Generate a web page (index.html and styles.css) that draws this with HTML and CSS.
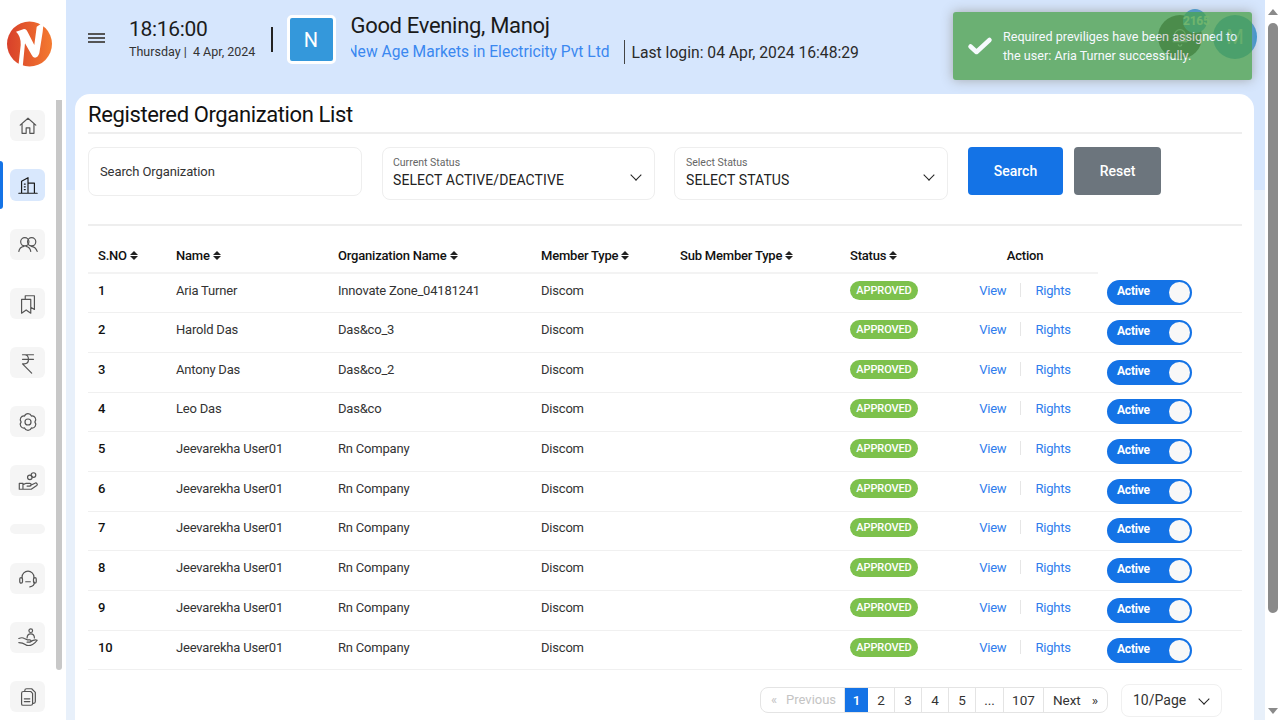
FILE: index.html
```html
<!DOCTYPE html>
<html lang="en">
<head>
    <meta charset="UTF-8">
    <title>Registered Organization List</title>
    <link rel="stylesheet" href="styles.css">
</head>
<body>
<div class="app">

    <aside class="sidebar">
        <div class="logo">
            <svg width="46" height="46" viewBox="0 0 46 46">
                <defs>
                    <linearGradient id="logoFill" x1="0" y1="0" x2="1" y2="0">
                        <stop offset="0" stop-color="#d8402a"/>
                        <stop offset="1" stop-color="#f47a30"/>
                    </linearGradient>
                </defs>
                <circle cx="22.500" cy="23" r="22.500" fill="url(#logoFill)"/>
                <path d="M9 10.700 L17 8 Q19.500 7.800 21.300 12.300 L27.300 24 L29.700 5.700 L36.300 1.300 Q36.500 5 35.700 10.700 L32.300 32.300 Q31 36.500 28 36.700 Q25.800 36.500 24.700 34 L18 22.300 L15.700 46 L11.300 46 L13.700 24 Q14 15 9 10.700 Z" fill="#fff"/>
            </svg>
        </div>
        <div class="side-body">
            <nav class="side-nav">
                <a class="side-item"><svg viewBox="0 0 24 24"><path d="M3.500 11 12 3.500l8.500 7.500M5.500 9.500V20h4.500v-6h4v6h4.500V9.500"/></svg></a>
                <a class="side-item current"><svg viewBox="0 0 24 24"><path d="M2 21h20M5 21V8l7-4v17M12 10h7v11M8 11h1M8 14h1M8 17h1"/></svg></a>
                <a class="side-item"><svg viewBox="0 0 24 24"><circle cx="8.500" cy="8.500" r="4.500"/><circle cx="16" cy="8.500" r="4.500"/><path d="M2 19c.5-3 3-5 5.500-5.500M10 13.500c2.500.5 4.500 2.500 5 5.500M15.500 13.500c3 .2 5.500 2.500 6.500 5.500"/></svg></a>
                <a class="side-item"><svg viewBox="0 0 24 24"><path d="M5 7h10v15l-5-3.500L5 22zM9 7V3h10v15l-4-2.500"/></svg></a>
                <a class="side-item"><svg viewBox="0 0 24 24"><path d="M6 3h12M6 8h12M8 3c6 0 6 10 0 10H6l10 10"/></svg></a>
                <a class="side-item"><svg viewBox="0 0 24 24"><circle cx="12" cy="12" r="3.300"/><path d="M19.500 12A4 4 0 0 1 15.750 18.500 4 4 0 0 1 8.250 18.500 4 4 0 0 1 4.500 12 4 4 0 0 1 8.250 5.500 4 4 0 0 1 15.750 5.500 4 4 0 0 1 19.500 12Z"/></svg></a>
                <a class="side-item"><svg viewBox="0 0 24 24"><circle cx="18" cy="5.500" r="2.500"/><circle cx="14" cy="8" r="2.500"/><path d="M2.500 14.500h4v6.500h-4zM6.500 16l3.500-1.500h4a1.500 1.500 0 0 1 0 3h-3M14.500 17l5-2.500a1.500 1.500 0 0 1 2 2.500l-6 4h-9"/></svg></a>
                <a class="side-item thin"></a>
                <a class="side-item"><svg viewBox="0 0 24 24"><path d="M5.500 11V10a6.500 6.500 0 0 1 13 0v1M19 15.500c0 3-2 4.500-5 5"/><rect x="3" y="10.500" width="3" height="6" rx="1.500"/><rect x="18" y="10.500" width="3" height="6" rx="1.500"/><path d="M9.500 15h5"/></svg></a>
                <a class="side-item"><svg viewBox="0 0 24 24"><circle cx="15" cy="4" r="2"/><path d="M11 12c0-3 2-4.500 4-4.500s4 1.500 4 4.500M2 12.500c2.500-1 4.500-1 6 0l3 1.500h3a1.200 1.200 0 0 1 0 2.500h-3M2 17c3 0 5 .5 7 2s5 1.500 8 0 4-3 5-4.500c-2-1-4-.5-8 2"/></svg></a>
                <a class="side-item"><svg viewBox="0 0 24 24"><path d="M15 6H7a2 2 0 0 0-2 2v11.500A1.500 1.500 0 0 0 6.500 21H15a2 2 0 0 0 2-2V8zM8.500 6V5a2 2 0 0 1 2-2H16l4 4v10a2 2 0 0 1-2 2h-1M8 14h6M8 17h6"/></svg></a>
            </nav>
            <div class="side-thumb"></div>
        </div>
        <div class="side-marker"></div>
    </aside>

    <main class="main">
        <header class="topbar">
            <div class="burger"><span></span><span></span><span></span></div>
            <div class="clock">
                <div class="clock-time">18:16:00</div>
                <div class="clock-date">Thursday |&nbsp; 4 Apr, 2024</div>
            </div>
            <div class="top-sep"></div>
            <div class="org-tile">N</div>
            <div class="welcome">
                <div class="welcome-name">Good Evening, Manoj</div>
                <div class="welcome-row">
                    <span class="welcome-org"><span>New Age Markets in Electricity Pvt Ltd</span></span>
                    <span class="welcome-login">Last login: 04 Apr, 2024 16:48:29</span>
                </div>
            </div>
            <div class="top-tools">
                <div class="bell">
                    <svg width="22" height="22" viewBox="0 0 24 24"><path d="M6 17V10a6 6 0 0 1 12 0v7M4 17h16M10 20a2 2 0 0 0 4 0"/></svg>
                    <span class="bell-count">2165</span>
                </div>
                <div class="user-round">M</div>
            </div>
        </header>

        <section class="card">
            <h1 class="card-title">Registered Organization List</h1>

            <div class="filters">
                <div class="field search-field">Search Organization</div>
                <div class="field select-field">
                    <div>
                        <div class="select-label">Current Status</div>
                        <div class="select-value">SELECT ACTIVE/DEACTIVE</div>
                    </div>
                    <span class="chevron"></span>
                </div>
                <div class="field select-field select-last">
                    <div>
                        <div class="select-label">Select Status</div>
                        <div class="select-value">SELECT STATUS</div>
                    </div>
                    <span class="chevron"></span>
                </div>
                <button class="btn btn-search">Search</button>
                <button class="btn btn-reset">Reset</button>
            </div>

            <table class="org-table">
                <thead>
                    <tr>
                        <th class="col-no">S.NO <i class="sort"></i></th>
                        <th class="col-name">Name <i class="sort"></i></th>
                        <th class="col-org">Organization Name <i class="sort"></i></th>
                        <th class="col-member">Member Type <i class="sort"></i></th>
                        <th class="col-sub">Sub Member Type <i class="sort"></i></th>
                        <th class="col-status">Status <i class="sort"></i></th>
                        <th class="col-action">Action</th>
                        <th class="col-toggle"></th>
                    </tr>
                </thead>
                <tbody>
                    <tr><td class="num">1</td><td>Aria Turner</td><td>Innovate Zone_04181241</td><td>Discom</td><td></td><td><span class="badge">APPROVED</span></td><td class="links"><a>View</a><b></b><a>Rights</a></td><td class="switch"><span class="toggle">Active</span></td></tr>
                    <tr><td class="num">2</td><td>Harold Das</td><td>Das&amp;co_3</td><td>Discom</td><td></td><td><span class="badge">APPROVED</span></td><td class="links"><a>View</a><b></b><a>Rights</a></td><td class="switch"><span class="toggle">Active</span></td></tr>
                    <tr><td class="num">3</td><td>Antony Das</td><td>Das&amp;co_2</td><td>Discom</td><td></td><td><span class="badge">APPROVED</span></td><td class="links"><a>View</a><b></b><a>Rights</a></td><td class="switch"><span class="toggle">Active</span></td></tr>
                    <tr><td class="num">4</td><td>Leo Das</td><td>Das&amp;co</td><td>Discom</td><td></td><td><span class="badge">APPROVED</span></td><td class="links"><a>View</a><b></b><a>Rights</a></td><td class="switch"><span class="toggle">Active</span></td></tr>
                    <tr><td class="num">5</td><td>Jeevarekha User01</td><td>Rn Company</td><td>Discom</td><td></td><td><span class="badge">APPROVED</span></td><td class="links"><a>View</a><b></b><a>Rights</a></td><td class="switch"><span class="toggle">Active</span></td></tr>
                    <tr><td class="num">6</td><td>Jeevarekha User01</td><td>Rn Company</td><td>Discom</td><td></td><td><span class="badge">APPROVED</span></td><td class="links"><a>View</a><b></b><a>Rights</a></td><td class="switch"><span class="toggle">Active</span></td></tr>
                    <tr><td class="num">7</td><td>Jeevarekha User01</td><td>Rn Company</td><td>Discom</td><td></td><td><span class="badge">APPROVED</span></td><td class="links"><a>View</a><b></b><a>Rights</a></td><td class="switch"><span class="toggle">Active</span></td></tr>
                    <tr><td class="num">8</td><td>Jeevarekha User01</td><td>Rn Company</td><td>Discom</td><td></td><td><span class="badge">APPROVED</span></td><td class="links"><a>View</a><b></b><a>Rights</a></td><td class="switch"><span class="toggle">Active</span></td></tr>
                    <tr><td class="num">9</td><td>Jeevarekha User01</td><td>Rn Company</td><td>Discom</td><td></td><td><span class="badge">APPROVED</span></td><td class="links"><a>View</a><b></b><a>Rights</a></td><td class="switch"><span class="toggle">Active</span></td></tr>
                    <tr><td class="num">10</td><td>Jeevarekha User01</td><td>Rn Company</td><td>Discom</td><td></td><td><span class="badge">APPROVED</span></td><td class="links"><a>View</a><b></b><a>Rights</a></td><td class="switch"><span class="toggle">Active</span></td></tr>
                </tbody>
            </table>

            <div class="table-foot">
                <div class="pager">
                    <a class="pg pg-prev"><span>«</span>Previous</a>
                    <a class="pg pg-on">1</a>
                    <a class="pg pg-n">2</a>
                    <a class="pg pg-n">3</a>
                    <a class="pg pg-n">4</a>
                    <a class="pg pg-n">5</a>
                    <a class="pg pg-dots">...</a>
                    <a class="pg pg-last">107</a>
                    <a class="pg pg-next">Next<span>»</span></a>
                </div>
                <div class="page-size">10/Page <span class="chevron"></span></div>
            </div>
        </section>
    </main>

    <div class="page-scroll">
        <span class="arrow-up"></span>
        <div class="page-thumb"></div>
        <span class="arrow-down"></span>
    </div>

    <div class="toast">
        <svg width="26" height="20" viewBox="0 0 26 20"><path d="M3.500 10.500l6 5.500L22.500 4" /></svg>
        <p>Required previliges have been assigned to the user: Aria Turner successfully.</p>
    </div>
</div>
</body>
</html>
```
FILE: styles.css
```css
*{
    box-sizing: border-box;
}

html, body{
    margin: 0;
    height: 720px;
    overflow: hidden;
}

body{
    font-family: "Roboto", "Liberation Sans", sans-serif;
    color: #212529;
    background: #fff;
}

.app{
    position: relative;
    display: flex;
    width: 1280px;
    height: 720px;
}

/* sidebar */
.sidebar{
    position: relative;
    width: 66px;
    flex: none;
    background: #fff;
}

.logo{
    height: 100px;
    padding: 21px 0 0 7px;
}

.side-body{
    display: flex;
}

.side-nav{
    width: 56px;
    padding: 10px 0 0 10px;
    display: flex;
    flex-direction: column;
    gap: 28px;
}

.side-item{
    width: 35px;
    height: 31px;
    background: #f5f5f5;
    border-radius: 6px;
    display: flex;
    align-items: center;
    justify-content: center;
}

.side-item svg{
    width: 22px;
    height: 22px;
    fill: none;
    stroke: #555;
    stroke-width: 1.300;
    stroke-linejoin: round;
    stroke-linecap: round;
}

.side-item.current{
    background: #d9e8fd;
    height: 32px;
}

.side-item.current svg{
    stroke: #1a1a1a;
}

.side-item.thin{
    height: 10px;
    margin-bottom: 1px;
}

.side-thumb{
    width: 6px;
    height: 570px;
    background: #c8c8c8;
    border-radius: 0 0 3px 3px;
}

.side-marker{
    position: absolute;
    left: 0;
    top: 161px;
    width: 3px;
    height: 48px;
    background: #1473e6;
    border-radius: 0 3px 3px 0;
}

/* main area */
.main{
    flex: 1;
    min-width: 0;
    background: linear-gradient(#d6e6fd 190px, #e8f0fa 190px);
}

.topbar{
    height: 94px;
    display: flex;
    align-items: flex-start;
    padding-left: 22px;
}

.burger{
    width: 17px;
    margin-top: 33px;
    margin-right: 24px;
}

.burger span{
    display: block;
    height: 2px;
    background: #555;
    margin-bottom: 2px;
}

.clock{
    width: 142px;
    padding-top: 16px;
}

.clock-time{
    font-size: 21px;
    line-height: 27px;
    letter-spacing: -0.300px;
    color: #1c1c1c;
}

.clock-date{
    font-size: 12.500px;
    line-height: 15px;
    margin-top: 1px;
    color: #333;
    white-space: nowrap;
}

.top-sep{
    width: 1.500px;
    height: 25px;
    margin-top: 27px;
    background: #222;
}

.org-tile{
    width: 49px;
    height: 49px;
    margin: 15px 15px 0 14px;
    border: 3px solid #fff;
    border-radius: 5px;
    background: #3498db;
    color: #fff;
    font-size: 20px;
    display: flex;
    align-items: center;
    justify-content: center;
}

.welcome{
    width: 520px;
    padding-top: 12px;
}

.welcome-name{
    font-size: 22px;
    line-height: 28px;
    letter-spacing: -0.320px;
    color: #1a1a1a;
}

.welcome-row{
    display: flex;
    align-items: center;
    height: 24px;
}

.welcome-org{
    width: 274px;
    height: 24px;
    line-height: 24px;
    overflow: hidden;
    font-size: 15.600px;
    color: #3b88f0;
    white-space: nowrap;
    border-right: 1px solid #444;
    padding-right: 12px;
}

.welcome-org span{
    margin-left: -4px;
}

.welcome-login{
    margin-left: 7px;
    font-size: 15.700px;
    color: #2a2a2a;
    white-space: nowrap;
}

.top-tools{
    display: flex;
    margin-left: auto;
    margin-right: 8px;
    margin-top: 15px;
    gap: 11px;
}

.bell{
    position: relative;
    width: 44px;
    height: 44px;
    border-radius: 50%;
    background: #333;
    display: flex;
    align-items: center;
    justify-content: center;
}

.bell svg{
    fill: none;
    stroke: #bbb;
    stroke-width: 1.200;
}

.bell-count{
    position: absolute;
    top: -6px;
    right: -5px;
    width: 24px;
    height: 24px;
    border-radius: 50%;
    background: #3498db;
    color: #f2ffe0;
    font-size: 12px;
    font-weight: 700;
    letter-spacing: -0.200px;
    line-height: 24px;
    text-align: center;
}

.user-round{
    width: 44px;
    height: 44px;
    border-radius: 50%;
    background: #3498db;
    color: #c0e0e0;
    font-size: 20px;
    display: flex;
    align-items: center;
    justify-content: center;
}

/* card */
.card{
    height: 626px;
    margin: 0 11px 0 9px;
    padding: 0 12px 0 13px;
    background: #fff;
    border-radius: 15px 15px 0 0;
}

.card-title{
    margin: 0;
    height: 40px;
    padding-top: 7px;
    font-size: 22px;
    line-height: 28px;
    font-weight: 400;
    letter-spacing: -0.380px;
    color: #111;
    border-bottom: 2px solid #eee;
}

.filters{
    display: flex;
    align-items: flex-start;
    margin-top: 13px;
    height: 79px;
    border-bottom: 2px solid #eee;
}

.field{
    border: 1px solid #eee;
    border-radius: 8px;
    background: #fff;
}

.search-field{
    width: 274px;
    height: 49px;
    margin-right: 20px;
    padding-left: 11px;
    font-size: 13px;
    letter-spacing: -0.100px;
    line-height: 47px;
    color: #333;
}

.select-field{
    width: 273px;
    height: 53px;
    margin-right: 19px;
    padding: 9px 14px 0 10px;
    display: flex;
    justify-content: space-between;
    align-items: center;
}

.select-last{
    width: 274px;
    margin-right: 20px;
    padding-left: 11px;
}

.select-label{
    font-size: 10.500px;
    line-height: 12px;
    color: #666;
}

.select-value{
    font-size: 14px;
    line-height: 20px;
    letter-spacing: 0.080px;
    margin-top: 1px;
    margin-bottom: 9px;
    color: #222;
}

.chevron{
    display: inline-block;
    width: 8px;
    height: 8px;
    border-right: 1.500px solid #222;
    border-bottom: 1.500px solid #222;
    transform: rotate(45deg);
    margin-bottom: 7px;
}

.btn{
    height: 48px;
    border: none;
    border-radius: 4px;
    color: #fff;
    font-family: inherit;
    font-size: 14px;
    font-weight: 500;
}

.btn-search{
    width: 95px;
    margin-right: 11px;
    background: #1473e6;
}

.btn-reset{
    width: 87px;
    background: #6c757d;
}

/* table */
.org-table{
    width: 1154px;
    table-layout: fixed;
    border-collapse: collapse;
    font-size: 13px;
}

.org-table th{
    height: 47px;
    padding: 12px 0 0 10px;
    font-weight: 500;
    font-size: 13px;
    letter-spacing: -0.200px;
    color: #111;
    text-align: left;
    border-bottom: 2px solid #f3f3f3;
}

.org-table th.col-toggle{
    border-bottom: none;
}

.org-table th.col-action{
    text-align: center;
    padding-left: 0;
}

.col-no{ width: 78px; }
.col-name{ width: 162px; }
.col-org{ width: 203px; }
.col-member{ width: 139px; }
.col-sub{ width: 170px; }
.col-status{ width: 112px; }
.col-action{ width: 146px; }

.org-table td{
    height: 39.700px;
    padding: 0 0 6px 10px;
    letter-spacing: -0.200px;
    color: #333;
    border-bottom: 1px solid #f0f0f0;
    white-space: nowrap;
}

.org-table td.num{
    font-weight: 500;
    color: #111;
}

.sort{
    position: relative;
    display: inline-block;
    width: 8px;
    height: 9px;
    vertical-align: -0.500px;
}

.sort::before, .sort::after{
    content: "";
    position: absolute;
    left: 0;
    border-left: 4px solid transparent;
    border-right: 4px solid transparent;
}

.sort::before{
    top: 0;
    border-bottom: 4px solid #222;
}

.sort::after{
    bottom: 0;
    border-top: 4px solid #222;
}

.badge{
    display: inline-block;
    width: 68px;
    height: 19px;
    border-radius: 9.500px;
    background: #7dc14c;
    color: #fff;
    font-size: 11px;
    font-weight: 500;
    letter-spacing: -0.100px;
    line-height: 19px;
    text-align: center;
}

.org-table td.links{
    padding-left: 0;
    padding-right: 0;
    text-align: center;
}

.links a{
    color: #2f7ded;
}

.links b{
    display: inline-block;
    width: 1px;
    height: 14px;
    margin: 0 14px;
    background: #e6e6e6;
    vertical-align: -2px;
}

.org-table td.switch{
    padding: 0 0 0 9px;
}

.toggle{
    position: relative;
    display: block;
    width: 85px;
    height: 25px;
    padding-left: 10px;
    border-radius: 13px;
    background: #1473e6;
    color: #fff;
    font-size: 12px;
    font-weight: 700;
    line-height: 23px;
}

.toggle::after{
    content: "";
    position: absolute;
    right: 2px;
    top: 2px;
    width: 21px;
    height: 21px;
    border-radius: 50%;
    background: #f8f8f8;
}

/* pager */
.table-foot{
    display: flex;
    justify-content: flex-end;
    align-items: center;
    margin-top: 14px;
    padding-right: 20px;
}

.pager{
    display: flex;
    height: 26px;
    margin: 0 13px 2px 0;
    border: 1px solid #e4e4e4;
    border-radius: 8px;
    overflow: hidden;
    font-size: 13.500px;
}

.pg{
    border-right: 1px solid #e4e4e4;
    text-align: center;
    line-height: 24px;
    color: #333;
}

.pg-prev{
    width: 84px;
    font-size: 13px;
    color: #c4c4c4;
}

.pg-prev span{
    margin: 0 9px 0 2px;
}

.pg-on{
    width: 23px;
    background: #1473e6;
    color: #fff;
    font-weight: 500;
    border-right: none;
}

.pg-n{
    width: 27px;
}

.pg-dots{
    width: 28px;
}

.pg-last{
    width: 40px;
}

.pg-next{
    width: 63px;
    border-right: none;
}

.pg-next span{
    margin-left: 11px;
}

.page-size{
    width: 101px;
    height: 33px;
    border: 1px solid #f0f0f0;
    border-radius: 8px;
    font-size: 14px;
    line-height: 31px;
    padding-left: 11px;
    color: #333;
    white-space: nowrap;
}

.page-size .chevron{
    margin: 0 0 2px 10px;
}

/* page scrollbar */
.page-scroll{
    width: 15px;
    flex: none;
    background: #fff;
    display: flex;
    flex-direction: column;
    align-items: center;
}

.arrow-up, .arrow-down{
    width: 0;
    height: 0;
    border-left: 5px solid transparent;
    border-right: 5px solid transparent;
}

.arrow-up{
    margin-top: 9px;
    border-bottom: 6px solid #8a8a8a;
}

.arrow-down{
    margin-top: 95px;
    border-top: 6px solid #8a8a8a;
}

.page-thumb{
    width: 10px;
    height: 590px;
    margin-top: 8px;
    background: #8a8a8a;
    border-radius: 5px;
}

/* toast */
.toast{
    position: absolute;
    left: 953px;
    top: 12px;
    width: 299px;
    height: 68px;
    display: flex;
    align-items: center;
    padding: 0 12px 0 14px;
    background: #51a351;
    opacity: 0.8;
    color: #fff;
    border-radius: 3px;
    box-shadow: 0 0 12px #999;
}

.toast svg{
    flex: none;
    margin-right: 10px;
    fill: none;
    stroke: #fff;
    stroke-width: 4.500;
    stroke-linecap: round;
    stroke-linejoin: round;
}

.toast p{
    margin: 0;
    font-size: 12.600px;
    line-height: 19px;
}
```
